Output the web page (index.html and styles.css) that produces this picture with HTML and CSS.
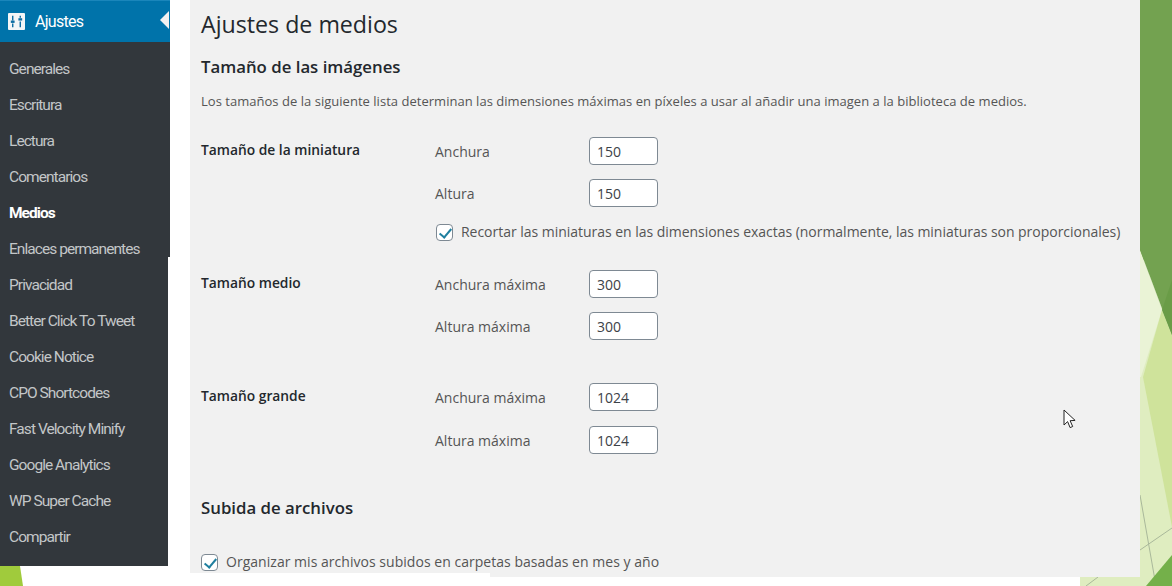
FILE: index.html
```html
<!DOCTYPE html>
<html lang="es">
<head>
  <meta charset="UTF-8">
  <title>Ajustes de medios</title>
  <link rel="stylesheet" href="styles.css">
</head>
<body>
  <svg class="backdrop" viewBox="0 0 1172 586" aria-hidden="true">
    <rect x="1140" y="0" width="32" height="260" fill="#73a250"/>
    <polygon points="1140,250 1172,335 1172,586 1080,586 1080,577 1140,577" fill="#dfedc0"/>
    <polygon points="1140,250 1162,310 1141,377 1140,377" fill="#eaf3d6"/>
    <polygon points="1143,377 1162,310 1172,335 1172,527" fill="#cfe39b"/>
    <polygon points="1140,250 1172,250 1172,335" fill="#73a250"/>
    <polygon points="1162,310 1172,280 1172,335" fill="#6a9c47"/>
    <path d="M1140 495L1156 586M1140 550L1172 528M1098 577L1086 586" stroke="#a9b89a" stroke-width="1" fill="none"/>
    <polygon points="1146,586 1172,555 1172,586" fill="#74b04a"/>
    <polygon points="0,566 20,566 23,586 0,586" fill="#a0cb3c"/>
  </svg>

  <div class="layout">
    <nav class="sidebar">
      <div class="menu-head">
        <svg class="menu-icon" viewBox="0 0 18 18">
          <rect width="18" height="18" rx="1" fill="#f4f6f7"/>
          <path d="M5 3v5M5 11v4M13 3v2M13 9v6" stroke="#0f6ea3" stroke-width="1.5" fill="none"/>
          <rect x="3" y="8" width="4" height="2.5" fill="#0f6ea3"/>
          <rect x="11" y="5.5" width="4" height="2.5" fill="#0f6ea3"/>
        </svg>
        <span>Ajustes</span>
        <i class="menu-arrow"></i>
      </div>
      <ul class="submenu">
        <li>Generales</li>
        <li>Escritura</li>
        <li>Lectura</li>
        <li>Comentarios</li>
        <li class="current">Medios</li>
        <li>Enlaces permanentes</li>
        <li>Privacidad</li>
        <li>Better Click To Tweet</li>
        <li>Cookie Notice</li>
        <li>CPO Shortcodes</li>
        <li>Fast Velocity Minify</li>
        <li>Google Analytics</li>
        <li>WP Super Cache</li>
        <li>Compartir</li>
      </ul>
    </nav>

    <main class="content">
      <h1>Ajustes de medios</h1>
      <h2>Tamaño de las imágenes</h2>
      <p class="intro">Los tamaños de la siguiente lista determinan las dimensiones máximas en píxeles a usar al añadir una imagen a la biblioteca de medios.</p>

      <section class="size-row size-thumb">
        <h3>Tamaño de la miniatura</h3>
        <div class="fields">
          <label class="field"><span>Anchura</span><input type="text" value="150"></label>
          <label class="field"><span>Altura</span><input type="text" value="150"></label>
          <label class="check"><i class="box"></i>Recortar las miniaturas en las dimensiones exactas (normalmente, las miniaturas son proporcionales)</label>
        </div>
      </section>

      <section class="size-row size-medium">
        <h3>Tamaño medio</h3>
        <div class="fields">
          <label class="field"><span>Anchura máxima</span><input type="text" value="300"></label>
          <label class="field"><span>Altura máxima</span><input type="text" value="300"></label>
        </div>
      </section>

      <section class="size-row size-large">
        <h3>Tamaño grande</h3>
        <div class="fields">
          <label class="field"><span>Anchura máxima</span><input type="text" value="1024"></label>
          <label class="field"><span>Altura máxima</span><input type="text" value="1024"></label>
        </div>
      </section>

      <h2 class="uploads-title">Subida de archivos</h2>
      <label class="check uploads-check"><i class="box"></i>Organizar mis archivos subidos en carpetas basadas en mes y año</label>
    </main>
  </div>

  <svg class="cursor" viewBox="0 0 13 20" aria-hidden="true">
    <path d="M1 1v15l3.6-3.4 2.5 6 2.6-1.1-2.6-5.8 5-.3z" fill="#fff" stroke="#222" stroke-width="1"/>
  </svg>
</body>
</html>
```

FILE: styles.css
```css
* {
  box-sizing: border-box;
}
html, body {
  height: 100%;
}
body {
  margin: 0;
  height: 586px;
  overflow: hidden;
  background: #fff;
  font-family: 'Open Sans', 'Noto Sans', sans-serif;
  color: #555;
  position: relative;
}
.backdrop {
  position: absolute;
  left: 0;
  top: 0;
  width: 1172px;
  height: 586px;
}
.layout {
  position: relative;
  display: flex;
  align-items: flex-start;
  width: 1140px;
}

/* menu lateral */
.sidebar {
  width: 168px;
  height: 566px;
  margin-right: 22px;
  background: #32373c;
  flex: none;
}
.menu-head {
  width: 170px;
  height: 42px;
  background: #0073aa;
  border-top: 1px solid #1a86bb;
  display: flex;
  align-items: center;
  padding-left: 8px;
  color: #fff;
  font-family: 'Roboto', sans-serif;
  font-size: 16px;
  letter-spacing: -0.7px;
  position: relative;
}
.menu-icon {
  width: 17px;
  height: 17px;
  margin-right: 10px;
}
.menu-arrow {
  position: absolute;
  right: 1px;
  top: 10px;
  border: 9px solid transparent;
  border-left: 0;
  border-right: 9px solid #f1f1f1;
}
.submenu {
  list-style: none;
  margin: 0;
  padding: 9px 0 0 9px;
  width: 170px;
  background: linear-gradient(#32373c, #32373c) no-repeat 0 0 / 170px 215px;
}
.submenu li {
  height: 36px;
  line-height: 36px;
  font-family: 'Roboto', sans-serif;
  font-size: 15.5px;
  letter-spacing: -0.95px;
  color: #c3c6c8;
  white-space: nowrap;
}
.submenu .current {
  color: #fff;
  font-weight: 700;
}

/* contenido */
.content {
  flex: 1;
  height: 577px;
  background: linear-gradient(#fff, #fff) no-repeat 0 100% / 300px 4px, #f1f1f1;
  padding: 8px 10px 0 11px;
}
h1 {
  margin: 0;
  font-size: 23.2px;
  line-height: 32px;
  font-weight: 400;
  color: #23282d;
}
h2 {
  margin: 15px 0 0;
  font-size: 16.8px;
  line-height: 24px;
  font-weight: 600;
  color: #23282d;
}
.intro {
  margin: 12px 0 0;
  font-size: 13px;
  line-height: 20px;
  letter-spacing: 0.027px;
}
.size-row {
  display: flex;
}
.size-row h3 {
  width: 234px;
  margin: 0;
  padding-top: 3px;
  font-size: 13.8px;
  line-height: 20px;
  font-weight: 600;
  color: #23282d;
  flex: none;
}
.size-thumb {
  margin-top: 26px;
}
.size-medium {
  margin-top: 28px;
}
.size-large {
  margin-top: 43px;
}
.fields {
  display: flex;
  flex-direction: column;
  gap: 14px;
}
.size-large .fields {
  gap: 15px;
}
.field {
  display: flex;
  align-items: center;
  height: 28px;
  font-size: 14px;
}
.field span {
  width: 154px;
}
.field input {
  width: 69px;
  height: 28px;
  padding: 0 7px;
  border: 1px solid #7e8993;
  border-radius: 4px;
  background: #fff;
  font: inherit;
  font-size: 14px;
  color: #3c4248;
}
.check {
  display: flex;
  align-items: center;
  font-size: 14px;
  line-height: 20px;
  white-space: nowrap;
}
.box {
  width: 17px;
  height: 17px;
  margin-right: 8px;
  border: 1px solid #7e8993;
  border-radius: 4px;
  background: #fff;
  position: relative;
  flex: none;
}
.box::after {
  content: "";
  position: absolute;
  left: 5px;
  top: 1px;
  width: 5px;
  height: 10px;
  border: solid #1f7f9f;
  border-width: 0 2.5px 2.5px 0;
  transform: rotate(40deg);
}
.size-thumb .check {
  margin: 1px 0 0 1px;
  letter-spacing: -0.03px;
}
.uploads-title {
  margin-top: 42px;
}
.uploads-check {
  margin-top: 32px;
  letter-spacing: 0.03px;
}

.cursor {
  position: absolute;
  left: 1063px;
  top: 409px;
  width: 13px;
  height: 20px;
}
```
